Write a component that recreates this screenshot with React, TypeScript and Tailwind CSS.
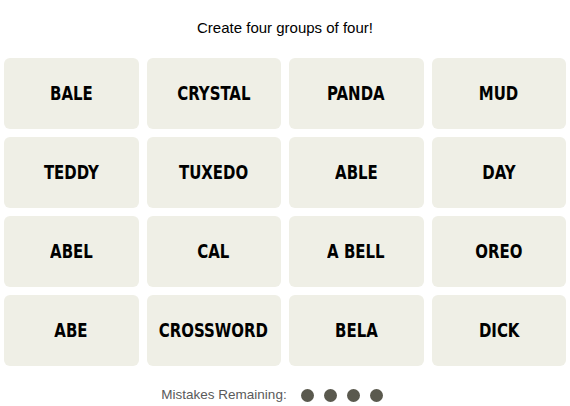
import React from 'react';

const words = [
  'BALE', 'CRYSTAL', 'PANDA', 'MUD',
  'TEDDY', 'TUXEDO', 'ABLE', 'DAY',
  'ABEL', 'CAL', 'A BELL', 'OREO',
  'ABE', 'CROSSWORD', 'BELA', 'DICK',
];

export default function App() {
  return (
    <div className="w-[570px] h-[406px] bg-white overflow-hidden" style={{ fontFamily: '"Liberation Sans", Arial, sans-serif' }}>
      <div className="h-[58px] flex items-center justify-center pb-[2px]">
        <p className="text-[15px] text-black">Create four groups of four!</p>
      </div>
      <div className="grid grid-cols-4 gap-x-2 gap-y-[8px] px-1">
        {words.map((w) => (
          <button
            key={w}
            className="h-[71px] rounded-md bg-[#efefe6] flex items-center justify-center text-black"
          >
            <span
              className="inline-block text-[19px] font-bold scale-x-[0.875]"
              style={{ fontFamily: '"DejaVu Sans Condensed", "DejaVu Sans", sans-serif' }}
            >
              {w}
            </span>
          </button>
        ))}
      </div>
      <div className="mt-[19px] pr-[26px] flex items-center justify-center gap-[14px] text-[13.5px] text-[#5a5a5a]">
        <span>Mistakes Remaining:</span>
        <div className="flex gap-[10px]">
          {[0, 1, 2, 3].map((i) => (
            <span key={i} className="w-[13px] h-[13px] rounded-full bg-[#5a594e]" />
          ))}
        </div>
      </div>
    </div>
  );
}
